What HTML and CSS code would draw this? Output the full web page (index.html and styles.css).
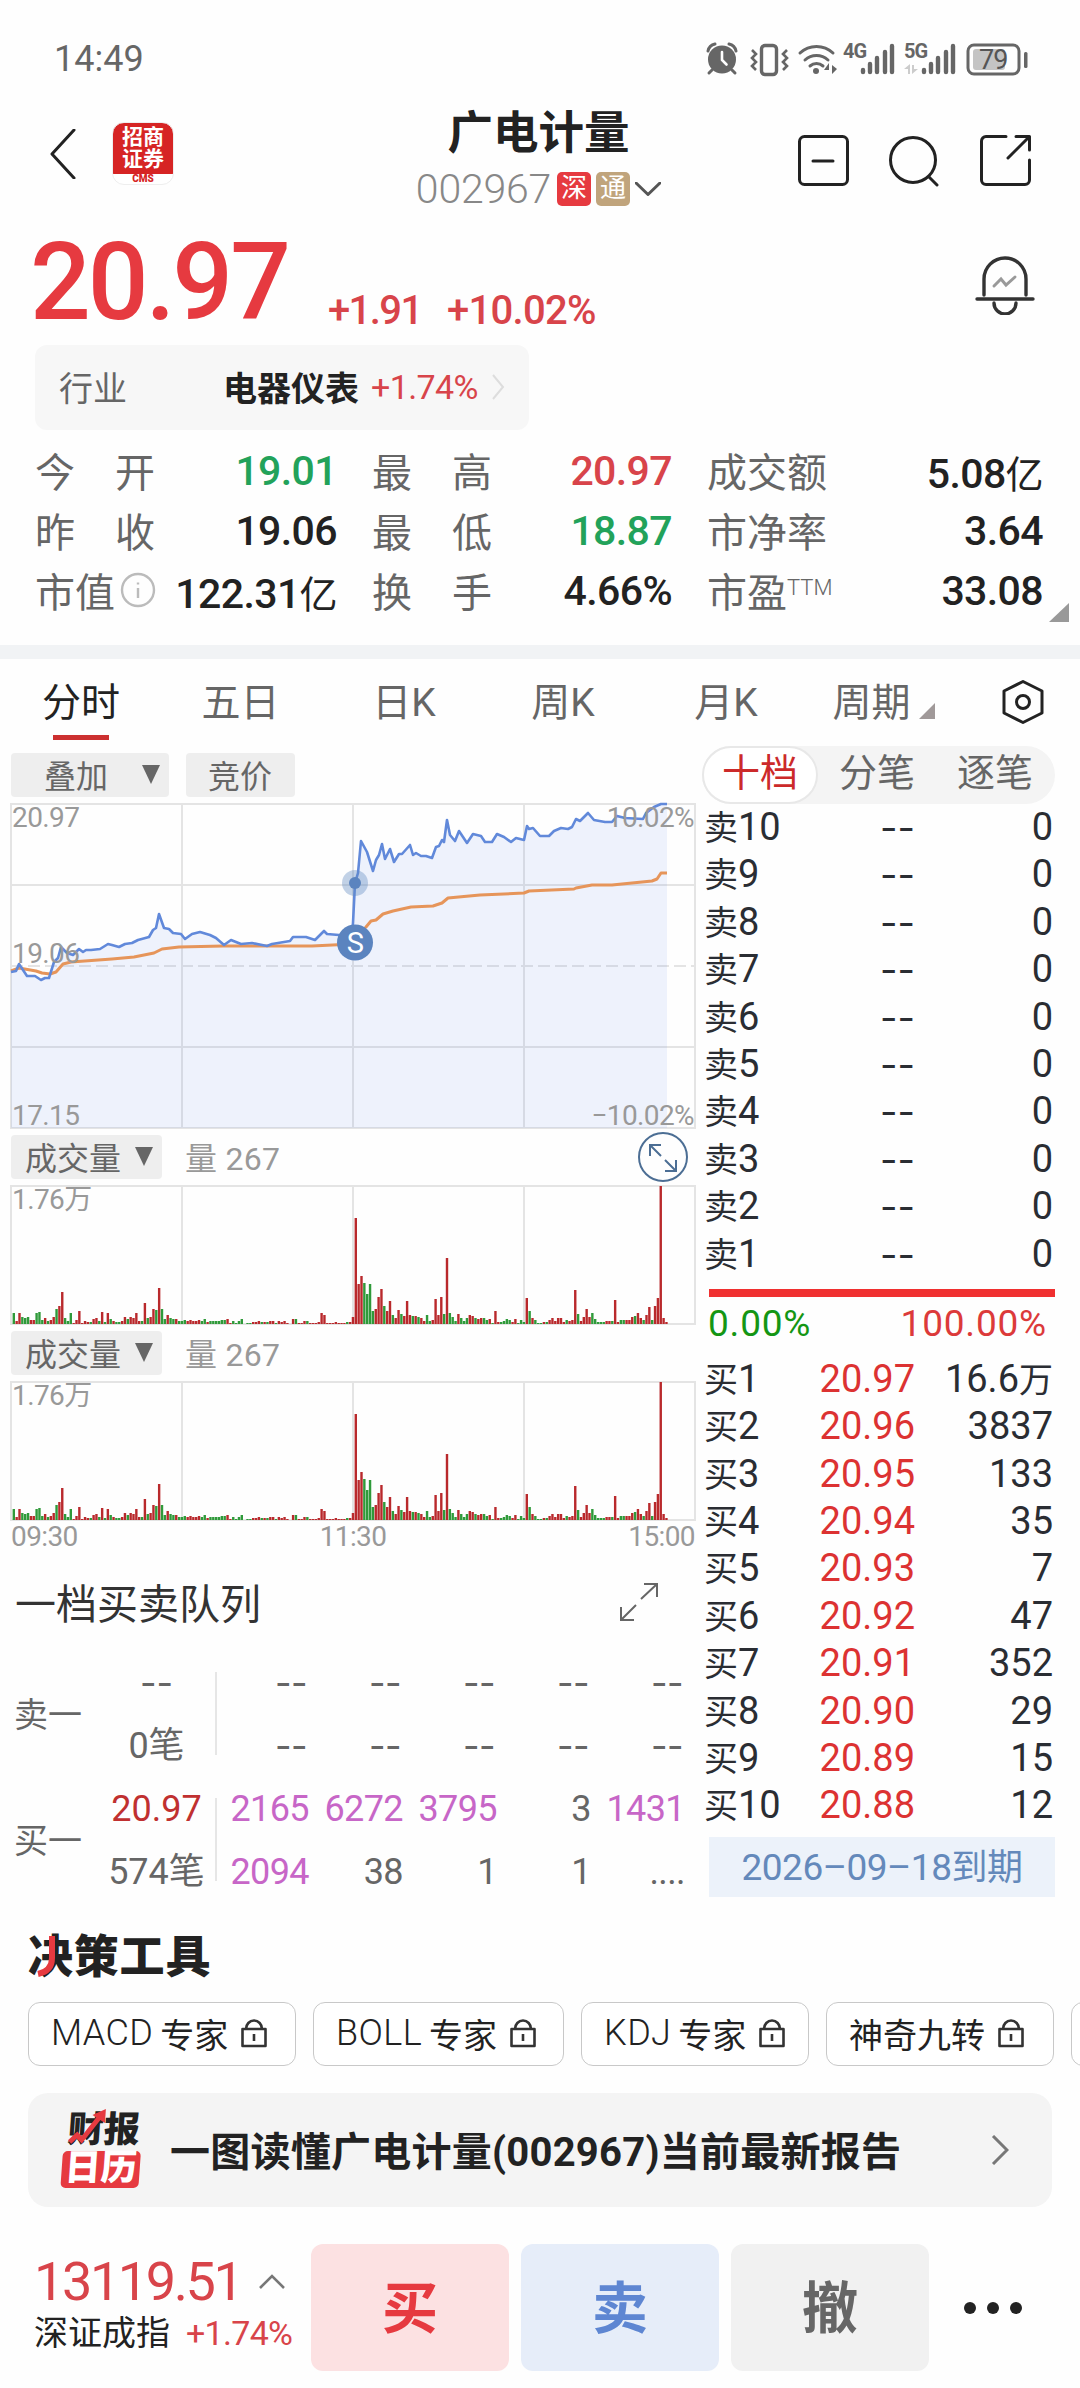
FILE: index.html
```html
<!DOCTYPE html>
<html lang="zh-CN">
<head>
  <meta charset="UTF-8" />
  <meta name="viewport" content="width=device-width, initial-scale=1.0" />
  <title>广电计量 002967</title>
  <link rel="stylesheet" href="styles.css">
</head>
<body>
  <div class="statusbar">
    <span class="clock">14:49</span>
    <svg width="330" height="40" viewBox="0 0 330 40" fill="none" stroke="#666" stroke-linecap="round">
      <!-- alarm -->
      <circle cx="16" cy="20.500" r="14" fill="#666" stroke="none" />
      <path d="M2 12a9 9 0 0 1 7-7M30 12a9 9 0 0 0-7-7" stroke-width="3" />
      <path d="M6 31l-3 3M26 31l3 3" stroke-width="3" />
      <path d="M16 13v8l4.500 4.500" stroke="#fff" stroke-width="2.600" />
      <!-- vibrate -->
      <rect x="55.500" y="6.500" width="15" height="29" rx="3.500" stroke-width="3.400" />
      <path d="M46 11l4 4-4 4 4 4-4 4 4 4M81 11l-4 4 4 4-4 4 4 4-4 4" stroke-width="2.600" stroke-linecap="butt" />
      <!-- wifi -->
      <path d="M94 14a24 24 0 0 1 33 0M99 21a17 17 0 0 1 23 0M104 27a10 10 0 0 1 13 0" stroke-width="3" />
      <circle cx="110" cy="32" r="3" fill="#666" stroke="none" />
      <path d="M118 31h5v-7zM126 26v9l5-5z" fill="#666" stroke="none" />
      <!-- signals -->
      <text class="net" x="137" y="19">4G</text>
      <path d="M157 31v2M164 25v8M171 19v14M179 13v20M186 7v26" stroke-width="4.400" />
      <text class="net" x="198" y="19">5G</text>
      <path d="M198 30h4v5h2v-10zM206 26v9l6-5h-4v-4z" fill="#ccc" stroke="none" />
      <path d="M218 31v2M225 25v8M232 19v14M240 13v20M247 7v26" stroke-width="4.400" />
      <!-- battery -->
      <rect x="262" y="6" width="51" height="29" rx="6" stroke-width="3" />
      <rect x="318" y="13" width="3.500" height="16" rx="1.500" fill="#666" stroke="none" />
      <rect x="267" y="10" width="32" height="21" rx="3" fill="#c4c4c4" stroke="none" />
      <text class="battery-text" x="273" y="30">79</text>
    </svg>
  </div>

  <header class="header">
    <div class="header-left">
      <svg class="back" width="26" height="50" viewBox="0 0 26 50"><path d="M24 1L2 25l22 24" /></svg>
      <div class="logo">
        <span>招商</span>
        <span>证券</span>
        <em>CMS</em>
      </div>
    </div>
    <div class="header-title">
      <h1>广电计量</h1>
      <div class="code">
        <span class="code-num">002967</span>
        <span class="tag tag-sz">深</span>
        <span class="tag tag-tong">通</span>
        <svg width="26" height="14" viewBox="0 0 26 14"><path d="M1 1l12 11.500L25 1" /></svg>
      </div>
    </div>
    <div class="header-actions">
      <svg width="52" height="52" viewBox="0 0 52 52"><rect x="1.500" y="1.500" width="48" height="48" rx="5" /><path d="M15 26h20" /></svg>
      <svg width="52" height="52" viewBox="0 0 52 52"><circle cx="24" cy="25" r="22.500" /><path d="M40 42l8 8" /></svg>
      <svg width="52" height="52" viewBox="0 0 52 52"><path d="M26 1.500H6a4.500 4.500 0 0 0-4.500 4.500v39a4.500 4.500 0 0 0 4.500 4.500h39a4.500 4.500 0 0 0 4.500-4.500V25M36 1.500h13.500V15M48.500 2.500L28 23" /></svg>
    </div>
  </header>

  <section class="quote">
    <strong class="price">20.97</strong>
    <span class="change">+1.91</span>
    <span class="change change-pct">+10.02%</span>
    <svg class="bell" width="60" height="60" viewBox="0 0 60 60">
      <path d="M9 40V24a21 21 0 0 1 42 0v16M2 44h56M19 48a11 11 0 0 0 22 0" />
      <path class="bell-trend" d="M19 31l7-7 5 6 9-8" />
    </svg>
  </section>

  <section class="industry">
    <span class="industry-label">行业</span>
    <b>电器仪表</b>
    <span class="industry-pct">+1.74%</span>
    <svg width="14" height="26" viewBox="0 0 14 26"><path d="M2 1l10 12L2 25" /></svg>
  </section>

  <section class="stats">
    <div class="stat"><span class="wide">今开</span><b class="down">19.01</b></div>
    <div class="stat"><span class="wide">最高</span><b class="up">20.97</b></div>
    <div class="stat"><span>成交额</span><b>5.08<i>亿</i></b></div>
    <div class="stat"><span class="wide">昨收</span><b>19.06</b></div>
    <div class="stat"><span class="wide">最低</span><b class="down">18.87</b></div>
    <div class="stat"><span>市净率</span><b>3.64</b></div>
    <div class="stat">
      <span>市值</span>
      <svg class="info" width="38" height="38" viewBox="0 0 38 38"><circle cx="19" cy="19" r="16" /><path d="M19 17v10M19 11.500v2" /></svg>
      <b>122.31<i>亿</i></b>
    </div>
    <div class="stat"><span class="wide">换手</span><b>4.66%</b></div>
    <div class="stat"><span>市盈<sup>TTM</sup></span><b>33.08</b></div>
  </section>

  <nav class="tabs">
    <span class="tab active">分时</span>
    <span class="tab">五日</span>
    <span class="tab">日K</span>
    <span class="tab">周K</span>
    <span class="tab">月K</span>
    <span class="tab tab-more">周期</span>
    <svg width="42" height="44" viewBox="0 0 42 44"><path d="M21 1.500l19 9.500v22l-19 9.500L2 33V11z" /><circle cx="21" cy="22" r="6.500" /></svg>
  </nav>

  <main class="main">
    <div class="left">
      <div class="toolbar">
        <span class="btn btn-overlay">叠加<i class="caret"></i></span>
        <span class="btn btn-auction">竞价</span>
      </div>

      <svg class="chart" width="684" height="324" viewBox="0 0 684 324">
        <path class="grid" d="M0 0H684V324H0zM171 0V324M342 0V324M513 0V324M0 81H684M0 243H684" />
        <path class="grid dashed" d="M0 162H684" />
        <path class="area" id="priceArea" />
        <path class="avg" d="M0 167L8 164 25 167 31 169 39 170 45 168 52 160 60 158 101 155 123 153 143 149 151 145 168 143 212 142 301 142 342 140 344 133 355 123 360 117 365 116 372 110 382 107 400 103 422 102 431 99 437 94 469 91 513 89 518 87 563 85 565 84 581 81 601 81 641 77 646 75 650 69 656 69" />
        <path class="price-line" id="priceLine" />
        <text x="1" y="23">20.97</text>
        <text x="1" y="159">19.06</text>
        <text x="1" y="321">17.15</text>
        <text class="end" x="683" y="23">10.02%</text>
        <text class="end" x="683" y="321">−10.02%</text>
        <circle cx="344" cy="79" r="13" fill="#5f88c0" fill-opacity=".38" />
        <circle cx="344" cy="79" r="6" fill="#5b84bf" />
        <circle cx="344" cy="138.500" r="18" fill="#5b84bf" />
        <text class="s-mark" x="344" y="149">S</text>
      </svg>

      <div class="vol-head">
        <span class="btn btn-vol">成交量<i class="caret"></i></span>
        <span class="vol-num">量 267</span>
        <svg class="zoom-icon" width="50" height="50" viewBox="0 0 50 50">
          <circle cx="25" cy="25" r="24" />
          <path d="M23 24L12 13M12 24V13h11M27 28l11 11M38 28v11H27" />
        </svg>
      </div>
      <svg class="chart vol-chart" width="684" height="138" viewBox="0 0 684 138">
        <path class="grid" d="M0 0H684V138H0zM171 0V138M342 0V138M513 0V138" />
        <path class="bars-up" /><path class="bars-down" />
        <text x="1" y="23">1.76万</text>
      </svg>

      <div class="vol-head">
        <span class="btn btn-vol">成交量<i class="caret"></i></span>
        <span class="vol-num">量 267</span>
      </div>
      <svg class="chart vol-chart" width="684" height="138" viewBox="0 0 684 138">
        <path class="grid" d="M0 0H684V138H0zM171 0V138M342 0V138M513 0V138" />
        <path class="bars-up" /><path class="bars-down" />
        <text x="1" y="23">1.76万</text>
      </svg>
      <div class="axis"><span>09:30</span><span>11:30</span><span>15:00</span></div>

      <div class="queue-head">
        <h2>一档买卖队列</h2>
        <svg width="40" height="40" viewBox="0 0 40 40"><path d="M22 17L38 2M25 2h13v13M17 23L2 38M2 25v13h13" /></svg>
      </div>
      <div class="queue">
        <span class="side">卖一</span>
        <div class="queue-price"><span class="dash">--</span><span>0笔</span></div>
        <div class="queue-cells">
          <span class="dash">--</span><span class="dash">--</span><span class="dash">--</span><span class="dash">--</span><span class="dash">--</span>
          <span class="dash">--</span><span class="dash">--</span><span class="dash">--</span><span class="dash">--</span><span class="dash">--</span>
        </div>
      </div>
      <div class="queue">
        <span class="side">买一</span>
        <div class="queue-price"><span class="queue-up">20.97</span><span>574笔</span></div>
        <div class="queue-cells">
          <span class="big">2165</span><span class="big">6272</span><span class="big">3795</span><span>3</span><span class="big">1431</span>
          <span class="big">2094</span><span>38</span><span>1</span><span>1</span><span class="dots">....</span>
        </div>
      </div>
    </div>

    <aside class="book">
      <div class="segment">
        <span class="on">十档</span>
        <span>分笔</span>
        <span>逐笔</span>
      </div>
      <div id="asks"></div>
      <div class="ratio-bar"></div>
      <div class="ratio"><span class="ratio-sell">0.00%</span><span class="ratio-buy">100.00%</span></div>
      <div id="bids"></div>
      <div class="expire">2026–09–18<i>到期</i></div>
    </aside>
  </main>

  <section class="tools">
    <h2 class="tools-title">决策工具
      <svg width="24" height="44" viewBox="0 0 24 44"><path d="M17 1v22q0 13-14 16" /></svg>
    </h2>
    <div class="chips">
      <span class="chip chip-macd"><em>MACD</em>专家<svg class="lock" width="26" height="29" viewBox="0 0 26 29"><path d="M1.500 10h23v17h-23zM5 10a8 8.500 0 0 1 16 0M13 15v7" /></svg></span>
      <span class="chip chip-boll"><em>BOLL</em>专家<svg class="lock" width="26" height="29" viewBox="0 0 26 29"><path d="M1.500 10h23v17h-23zM5 10a8 8.500 0 0 1 16 0M13 15v7" /></svg></span>
      <span class="chip chip-kdj"><em>KDJ</em>专家<svg class="lock" width="26" height="29" viewBox="0 0 26 29"><path d="M1.500 10h23v17h-23zM5 10a8 8.500 0 0 1 16 0M13 15v7" /></svg></span>
      <span class="chip chip-nine">神奇九转<svg class="lock" width="26" height="29" viewBox="0 0 26 29"><path d="M1.500 10h23v17h-23zM5 10a8 8.500 0 0 1 16 0M13 15v7" /></svg></span>
      <span class="chip chip-next"></span>
    </div>
    <div class="report">
      <div class="report-logo">
        <span class="report-top">财报</span>
        <span class="report-bottom">日历</span>
        <svg width="42" height="38" viewBox="0 0 42 38"><path class="trend" d="M4 33l7-7 5 5L33 7" /><path class="trend-tip" d="M25 6L38 0v14z" /></svg>
      </div>
      <strong>一图读懂广电计量(002967)当前最新报告</strong>
      <svg width="18" height="30" viewBox="0 0 18 30"><path d="M2 1l14 14L2 29" /></svg>
    </div>
  </section>

  <footer class="trade">
    <div class="index">
      <div class="index-value">13119.51<svg width="26" height="15" viewBox="0 0 26 15"><path d="M1 14L13 2l12 12" /></svg></div>
      <div class="index-name">深证成指<span>+1.74%</span></div>
    </div>
    <span class="trade-btn buy">买</span>
    <span class="trade-btn sell">卖</span>
    <span class="trade-btn cancel">撤</span>
    <div class="more"><i></i><i></i><i></i></div>
  </footer>

  <script src="script.js"></script>
</body>
</html>
```

FILE: styles.css
```css
*, *:before, *:after {
  box-sizing: border-box;
  margin: 0;
  padding: 0;
}

body {
  width: 1080px;
  height: 2388px;
  overflow: hidden;
  background: #fefefe;
  color: #222;
  font-family: Roboto, "Noto Sans CJK SC", sans-serif;
}

i, em {
  font-style: normal;
}

svg {
  display: block;
  flex: none;
}

/* Status bar */
.statusbar {
  display: flex;
  justify-content: space-between;
  align-items: center;
  height: 80px;
  padding: 38px 44px 0 54px;
}

.clock {
  font-size: 36px;
  line-height: 43px;
  color: #666;
}

.net {
  font-size: 20px;
  font-weight: 700;
  letter-spacing: -1px;
  fill: #666;
  stroke: none;
}

.battery-text {
  font-size: 27px;
  letter-spacing: -1px;
  fill: #555;
  stroke: none;
}

/* Header */
.header {
  display: grid;
  grid-template-columns: 1fr 300px 1fr;
  height: 140px;
}

.header svg {
  fill: none;
  stroke: #222;
  stroke-width: 3;
  stroke-linecap: round;
  stroke-linejoin: round;
}

.header-left {
  display: flex;
  align-items: flex-start;
  gap: 36px;
  padding: 42px 0 0 50px;
}

.back {
  margin-top: 7px;
}

.logo {
  display: flex;
  flex-direction: column;
  align-items: center;
  width: 62px;
  height: 63px;
  padding-top: 3px;
  border: 1px solid #eee;
  border-radius: 12px;
  background: linear-gradient(#d62424 51px, #fff 51px);
  overflow: hidden;
}

.logo span {
  font-size: 21px;
  line-height: 22px;
  font-weight: 700;
  color: #fff;
}

.logo em {
  margin-top: 4px;
  font-size: 10px;
  line-height: 10px;
  font-weight: 900;
  color: #d62424;
}

.header-title {
  display: flex;
  flex-direction: column;
  align-items: center;
  padding-top: 28px;
}

.header-title h1 {
  margin-left: -3px;
  font-size: 45.5px;
  line-height: 52px;
  font-weight: 700;
}

.code {
  display: flex;
  align-items: center;
  height: 40px;
  margin: 9px 0 0 -3px;
}

.code-num {
  margin-right: 6px;
  font-size: 41px;
  line-height: 42px;
  font-weight: 300;
  letter-spacing: -0.2px;
  color: #888;
}

.tag {
  width: 34px;
  height: 34px;
  margin-right: 5px;
  border-radius: 5px;
  font-size: 26px;
  line-height: 33px;
  text-align: center;
  color: #fff;
}

.tag-sz {
  background: #e63a40;
}

.tag-tong {
  background: #c0a47c;
}

.code svg {
  stroke: #555;
}

.header-actions {
  display: flex;
  justify-content: flex-end;
  gap: 39px;
  padding: 55px 48px 0 0;
}

/* Price */
.quote {
  display: flex;
  height: 122px;
  padding: 0 45px 0 30px;
  color: #e63a40;
}

.price {
  width: 298px;
  font-size: 107px;
  line-height: 126px;
  font-weight: 500;
  letter-spacing: -3px;
}

.change {
  width: 119px;
  padding-top: 57px;
  font-size: 40px;
  line-height: 68px;
  font-weight: 500;
  letter-spacing: -1.6px;
  color: #d8444a;
}

.change-pct {
  width: auto;
  letter-spacing: -0.7px;
}

.bell {
  margin: 35px 0 0 auto;
  fill: none;
  stroke: #333;
  stroke-width: 3.4;
  stroke-linecap: round;
}

.bell-trend {
  stroke: #999;
  stroke-width: 3;
}

/* Industry */
.industry {
  display: flex;
  align-items: center;
  width: 494px;
  height: 85px;
  margin: 3px 0 0 35px;
  padding: 0 0 2px 24px;
  border-radius: 12px;
  background: #f7f7f7;
  font-size: 34px;
}

.industry-label {
  width: 164px;
  color: #666;
}

.industry-pct {
  width: 121px;
  padding-left: 12px;
  font-size: 34px;
  letter-spacing: -0.6px;
  color: #d8444a;
}

.industry svg {
  margin-left: 11px;
  fill: none;
  stroke: #ddd;
  stroke-width: 2;
}

/* Stats */
.stats {
  position: relative;
  display: grid;
  grid-template-columns: 302px 300px 336px;
  column-gap: 35px;
  margin-top: 10px;
  padding-left: 35px;
}

.stat {
  display: flex;
  align-items: center;
  height: 60px;
  font-size: 40px;
  color: #666;
}

.stat b {
  margin-left: auto;
  padding-top: 2px;
  font-size: 41px;
  font-weight: 500;
  letter-spacing: -0.6px;
  color: #222;
}

.stat b i {
  font-size: 38px;
  font-weight: 400;
}

.stat b.up {
  color: #d8444a;
}

.stat b.down {
  color: #22a25a;
}

.wide {
  letter-spacing: 40px;
}

.stat sup {
  font-size: 22px;
  line-height: 1;
  vertical-align: 12px;
  font-weight: 300;
}

.info {
  margin-left: 4px;
  fill: none;
  stroke: #bbb;
  stroke-width: 2.4;
}

.stats:after {
  content: "";
  position: absolute;
  right: 11px;
  bottom: -2px;
  border-left: 20px solid transparent;
  border-bottom: 19px solid #999;
}

/* Period tabs */
.tabs {
  display: grid;
  grid-template-columns: 162px 157px 170px 148px 178px 151px 1fr;
  align-items: center;
  height: 100px;
  margin-top: 25px;
  border-top: 14px solid #f1f3f5;
  text-align: center;
}

.tab {
  position: relative;
  height: 86px;
  font-size: 39px;
  line-height: 89px;
  color: #666;
}

.tab.active {
  color: #222;
}

.tab.active:after {
  content: "";
  position: absolute;
  left: 53px;
  bottom: 5px;
  width: 56px;
  height: 5px;
  background: #cc3030;
}

.tab-more {
  padding-right: 38px;
}

.tab-more:after {
  content: "";
  position: absolute;
  right: 31px;
  top: 44px;
  border-left: 16px solid transparent;
  border-bottom: 16px solid #a09999;
}

.tabs svg {
  margin-left: 36px;
  fill: none;
  stroke: #222;
  stroke-width: 3;
  stroke-linejoin: round;
}

/* Charts */
.main {
  display: flex;
  height: 1165px;
}

.left {
  width: 702px;
  padding: 8px 0 0 11px;
}

.toolbar {
  display: flex;
  gap: 17px;
  margin-bottom: 7px;
}

.btn {
  display: flex;
  align-items: center;
  height: 44px;
  padding-bottom: 2px;
  border-radius: 4px;
  background: #eee;
  font-size: 32px;
  color: #666;
}

.btn-overlay {
  width: 158px;
  padding-left: 33px;
}

.btn-auction {
  width: 109px;
  padding-left: 22px;
}

.btn-vol {
  width: 151px;
  padding-left: 14px;
}

.caret {
  margin-left: auto;
  margin-right: 9px;
  border: 9px solid transparent;
  border-top: 19px solid #666;
  border-bottom: 0;
}

.chart {
  overflow: visible;
}

.chart text {
  font-size: 28px;
  letter-spacing: -0.6px;
  fill: #999;
}

.chart .end {
  text-anchor: end;
}

.grid {
  fill: none;
  stroke: #e4e4e4;
  stroke-width: 2;
}

.dashed {
  stroke-dasharray: 12 5;
}

.area {
  fill: #4a7ae8;
  fill-opacity: 0.09;
}

.avg {
  fill: none;
  stroke: #e6955a;
  stroke-width: 3;
  stroke-linejoin: round;
}

.price-line {
  fill: none;
  stroke: #6189da;
  stroke-width: 2.6;
  stroke-linejoin: round;
}

.chart .s-mark {
  font-size: 29px;
  fill: #fff;
  text-anchor: middle;
}

.vol-head {
  display: flex;
  align-items: center;
  height: 44px;
  margin: 7px 0;
}

.vol-num {
  margin-left: 23px;
  padding-bottom: 2px;
  font-size: 32px;
  letter-spacing: 0.3px;
  color: #999;
}

.zoom-icon {
  margin-left: auto;
  margin-right: 14px;
  fill: none;
  stroke: #4c6e94;
  stroke-width: 2;
}

.bars-up {
  fill: #b9292c;
}

.bars-down {
  fill: #2f9a3a;
}

.axis {
  display: flex;
  justify-content: space-between;
  width: 684px;
  font-size: 28px;
  line-height: 34px;
  height: 32px;
  letter-spacing: -0.6px;
  color: #999;
}

/* Order queue */
.queue-head {
  display: flex;
  align-items: center;
  justify-content: space-between;
  height: 60px;
  margin: 20px 43px 20px 4px;
}

.queue-head h2 {
  padding-bottom: 2px;
  font-size: 41px;
  font-weight: 400;
  color: #333;
}

.queue-head svg {
  fill: none;
  stroke: #666;
  stroke-width: 2;
}

.queue {
  display: flex;
  align-items: center;
  height: 126px;
  font-size: 36px;
  color: #666;
}

.side {
  width: 87px;
  padding: 0 0 5px 3px;
  font-size: 34px;
}

.queue-price {
  display: grid;
  width: 117px;
  text-align: center;
  line-height: 63px;
}

.queue-up {
  color: #c03030;
}

.queue-cells {
  position: relative;
  display: grid;
  grid-template-columns: repeat(5, 94px);
  line-height: 63px;
  text-align: right;
  letter-spacing: -0.6px;
}

.queue-cells:before {
  content: "";
  position: absolute;
  left: 0;
  top: 20px;
  width: 2px;
  height: 83px;
  background: #e6e6e6;
}

.queue .dash,
.row .dash {
  font-family: Inter, sans-serif;
}

.queue-cells .dash {
  padding-right: 2px;
}

.queue .big {
  color: #c766c7;
}

/* Order book */
.book {
  width: 353px;
  padding-top: 1px;
}

.segment {
  display: flex;
  height: 58px;
  border-radius: 29px;
  background: #f4f4f4;
  font-size: 38px;
  line-height: 54px;
  color: #666;
  text-align: center;
}

.segment span {
  width: 118px;
}

.segment .on {
  width: 116px;
  border: 2px solid #e8e8e8;
  border-radius: 29px;
  background: #fff;
  line-height: 51px;
  color: #cc2a2a;
}

.row {
  display: grid;
  grid-template-columns: 90px 121px 1fr;
  height: 47.4px;
  padding: 0 2px 0 2px;
  font-size: 38px;
  line-height: 47.4px;
  color: #2a2d33;
  text-align: right;
}

.row .name {
  text-align: left;
  white-space: nowrap;
}

.row i {
  font-size: 34px;
}

.row .bid {
  color: #dc3232;
}

.ratio-bar {
  height: 8px;
  margin: 11px 0 0 7px;
  background: #f03030;
}

.ratio {
  display: flex;
  justify-content: space-between;
  height: 59px;
  padding: 0 8px 0 6px;
  font-size: 37px;
  line-height: 54px;
  letter-spacing: 0.8px;
}

.ratio-sell {
  color: #149614;
}

.ratio-buy {
  color: #dc3a3a;
}

.expire {
  height: 60px;
  margin: 7px 0 0 7px;
  background: #ecf2fa;
  font-size: 37px;
  line-height: 61px;
  letter-spacing: -0.5px;
  text-align: center;
  color: #6489bb;
}

.expire i {
  font-size: 36px;
}

/* Tools */
.tools {
  padding: 16px 0 0 28px;
}

.tools-title {
  position: relative;
  height: 60px;
  font-size: 45px;
  line-height: 64px;
  font-weight: 900;
  letter-spacing: 0.8px;
}

.tools-title svg {
  position: absolute;
  left: 7px;
  top: 9px;
  fill: none;
  stroke: #e63a40;
  stroke-width: 6;
}

.chips {
  display: flex;
  gap: 17px;
  height: 64px;
  margin-top: 16px;
  overflow: hidden;
}

.chip {
  display: flex;
  flex: none;
  align-items: center;
  border: 1.5px solid #c8c8c8;
  border-radius: 12px;
  padding: 0 0 2px 22px;
  background: #fff;
  font-size: 34px;
  white-space: nowrap;
}

.chip em {
  margin-right: 7px;
  font-size: 36px;
  font-weight: 300;
  letter-spacing: 0.4px;
}

.chip-macd {
  width: 268px;
}

.chip-boll {
  width: 251px;
}

.chip-kdj {
  width: 228px;
}

.chip-nine {
  width: 228px;
}

.chip-next {
  width: 200px;
}

.lock {
  margin-left: 13px;
  fill: none;
  stroke: #333;
  stroke-width: 2.6;
  stroke-linejoin: round;
}

.report {
  display: flex;
  align-items: center;
  width: 1024px;
  height: 114px;
  margin-top: 27px;
  padding: 0 43px 0 34px;
  border-radius: 20px;
  background: #f4f4f4;
}

.report-logo {
  position: relative;
  width: 78px;
  margin: 0 29px 0 1px;
  transform: skewX(-4deg);
}

.report-logo span {
  display: block;
  height: 36px;
  font-size: 36px;
  line-height: 34px;
  font-weight: 900;
  text-align: center;
}

.report-top {
  padding-left: 1px;
}

.report-logo .report-bottom {
  height: 37px;
  margin-top: 2px;
  border-radius: 5px;
  background: #e63a40;
  color: #fff;
}

.report-logo svg {
  position: absolute;
  left: 2px;
  top: -4px;
}

.trend {
  fill: none;
  stroke: #e63a40;
  stroke-width: 5;
}

.trend-tip {
  fill: #e63a40;
}

.report strong {
  flex: 1;
  padding-bottom: 2px;
  font-size: 40px;
  font-weight: 700;
  letter-spacing: 0.25px;
  white-space: nowrap;
}

.report > svg {
  fill: none;
  stroke: #777;
  stroke-width: 3;
}

/* Trade bar */
.trade {
  display: flex;
  height: 127px;
  margin-top: 37px;
  padding-left: 34px;
}

.index {
  width: 277px;
}

.index-value {
  display: flex;
  align-items: center;
  height: 66px;
  padding-top: 9px;
  font-size: 54px;
  letter-spacing: -2.4px;
  color: #d8444a;
}

.index-value svg {
  margin-left: 18px;
  fill: none;
  stroke: #777;
  stroke-width: 2.6;
}

.index-name {
  font-size: 34px;
  line-height: 46px;
  white-space: nowrap;
}

.index-name span {
  margin-left: 16px;
  letter-spacing: -0.7px;
  color: #d8444a;
}

.trade-btn {
  width: 198px;
  margin-right: 12px;
  border-radius: 12px;
  font-size: 56px;
  line-height: 131px;
  font-weight: 700;
  text-align: center;
}

.buy {
  background: #fce1e2;
  color: #e63a40;
}

.sell {
  background: #e6edf9;
  color: #5e86d2;
}

.cancel {
  background: #f1f1f1;
  color: #666;
}

.more {
  display: flex;
  align-items: center;
  gap: 11px;
  margin-left: 23px;
}

.more i {
  width: 12px;
  height: 12px;
  border-radius: 50%;
  background: #222;
}
```

FILE: script.js
```js
// minute price line, chart pixels
const price = "0 168 5 167 8 160 16 172 24 172 30 176 34 174 38 174 43 158 47 154 50 143 56 149 62 151 68 145 72 148 75 146 80 146 89 145 97 140 101 141 108 143 114 140 121 139 127 136 138 133 142 126 145 124 148 110 153 124 158 125 162 129 170 130 174 135 181 130 189 128 199 131 205 134 213 141 220 136 230 140 241 139 256 142 261 140 279 137 282 133 295 133 304 136 313 127 316 130 328 131 341 131 342 119 344 79 347 69 350 37 356 48 362 67 365 56 368 51 371 40 374 55 379 45 383 58 388 50 391 50 399 41 402 51 405 49 410 52 415 52 421 54 425 43 428 42 431 36 433 38 436 16 439 31 444 37 448 27 452 33 456 39 462 30 470 32 474 38 481 38 486 30 493 33 500 38 505 34 513 36 516 22 518 25 522 24 529 32 538 32 543 27 550 24 557 25 561 23 565 15 569 17 577 9 583 16 594 18 601 18 606 12 614 14 632 15 635 9 643 3 650 0 656 0";
document.getElementById("priceLine").setAttribute("d", "M" + price);
document.getElementById("priceArea").setAttribute("d", "M" + price + " 656 324 0 324z");

// one bar per minute: r = up, g = down
const volume = "g11 r3 r11 g7 g6 g7 r4 r4 g11 g12 g4 r6 g3 r4 r7 g15 r18 r32 g6 g3 g11 r1 r4 r13 r1 r3 r2 g2 r5 r6 g3 r12 g2 r11 g5 r3 g2 g2 r3 r7 g5 r7 r6 r11 r3 g3 r21 g6 r7 r15 g14 r36 g15 g5 r9 g6 g5 r5 g3 g3 g4 r3 r4 r3 r3 r4 g3 g5 r2 g3 g3 g3 g3 g4 g4 r5 r1 g3 g1 g3 g5 r0 g1 g1 r2 r2 r3 g2 r2 g2 r3 r3 g1 r3 r2 r3 r1 r0 r5 g5 r1 r1 r3 g3 r1 r1 r1 r2 r11 r9 r1 r1 r1 r2 r1 r1 r1 g2 r2 r7 r106 r40 r48 g41 g30 g40 g13 r15 r27 r35 g18 r13 r23 g9 r6 r14 g10 r8 r23 r9 g8 r8 g7 r6 r3 g9 g3 r4 r25 r9 r27 g10 r66 g11 g7 g3 r10 g6 g3 g6 r9 r8 g6 r5 r6 g6 g4 r5 g1 r13 r2 g2 g3 g5 g4 r2 r5 g1 g4 g2 r26 g13 r6 g4 g1 g1 r2 g2 r4 r6 r3 r6 r6 r2 g4 r3 r4 r34 g10 r3 r7 r15 r7 g11 g5 g2 g2 g2 r3 r3 g3 r24 r2 g4 g4 r4 r4 r7 g8 r11 r6 g4 r9 r17 g4 r18 r26 r138 r6 r2".split(" ");

const bars = color => volume.map((v, i) => {
  if (v[0] !== color) return "";
  const h = Number(v.slice(1));
  return `M${(1.6 + i * 2.85).toFixed(2)} 138v${-h}h2.4v${h}z`;
}).join("");

document.querySelectorAll(".bars-up").forEach(el => el.setAttribute("d", bars("r")));
document.querySelectorAll(".bars-down").forEach(el => el.setAttribute("d", bars("g")));

const row = (side, n, priceCell, qty) =>
  `<div class="row"><span class="name"><i>${side}</i>${n}</span>${priceCell}<span>${qty}</span></div>`;

let asks = "";
for (let n = 10; n >= 1; n--) {
  asks += row("卖", n, '<span class="dash">--</span>', 0);
}
document.getElementById("asks").innerHTML = asks;

const bids = ["16.6<i>万</i>", 3837, 133, 35, 7, 47, 352, 29, 15, 12];
document.getElementById("bids").innerHTML = bids.map((qty, i) =>
  row("买", i + 1, `<span class="bid">${(20.97 - i * 0.01).toFixed(2)}</span>`, qty)
).join("");
```
